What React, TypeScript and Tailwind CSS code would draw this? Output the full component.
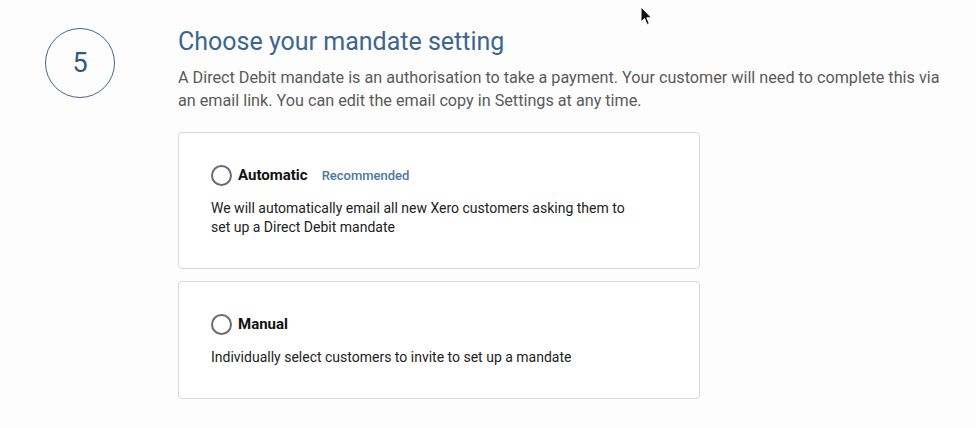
import React from 'react';

interface OptionProps {
  title: string;
  badge?: string;
  description: string;
  heightClass: string;
}

function MandateOption({ title, badge, description, heightClass }: OptionProps) {
  return (
    <label className={`flex w-[522px] flex-col rounded-[4px] border border-[#d9d9d9] bg-white pl-[32px] pt-[31px] ${heightClass}`}>
      <div className="flex items-center">
        <span className="h-[21px] w-[21px] rounded-full border-2 border-[#6b6b6b]" />
        <span className="ml-[6px] text-[15px] font-bold text-[#111]">{title}</span>
        {badge && <span className="ml-[14px] text-[13px] font-medium text-[#4a77a3]">{badge}</span>}
      </div>
      <p className="mt-[12px] max-w-[425px] text-[14px] leading-[19px] text-[#222]">{description}</p>
    </label>
  );
}

export default function App() {
  return (
    <div className="relative h-[428px] w-[976px] overflow-hidden bg-[#fdfdfd]" style={{ fontFamily: 'Roboto, "Noto Sans", sans-serif' }}>
      <div className="flex pl-[45px] pt-[28px]">
        <div className="flex h-[70px] w-[70px] shrink-0 items-center justify-center rounded-full border-[1.5px] border-[#3d6791] text-[27px] text-[#2f5a85]">
          5
        </div>
        <div className="ml-[63px] flex flex-col">
          <h1 className="text-[25px] leading-[28px] text-[#3b6690]">Choose your mandate setting</h1>
          <p className="mt-[10px] w-[775px] text-[16.2px] leading-[23px] text-[#5a5a5a]">
            A Direct Debit mandate is an authorisation to take a payment. Your customer will need to complete this via an email link. You can edit the email copy in Settings at any time.
          </p>
          <div className="mt-[20px] flex flex-col gap-[12px]">
            <MandateOption
              title="Automatic"
              badge="Recommended"
              description="We will automatically email all new Xero customers asking them to set up a Direct Debit mandate"
              heightClass="h-[137px]"
            />
            <MandateOption
              title="Manual"
              description="Individually select customers to invite to set up a mandate"
              heightClass="h-[118px]"
            />
          </div>
        </div>
      </div>
      <svg className="absolute left-[640px] top-[6px]" width="13" height="20" viewBox="0 0 13 20">
        <path d="M1 1 L1 16 L4.5 12.5 L7 18.5 L9.3 17.5 L6.8 11.8 L11.5 11.8 Z" fill="#111" stroke="#fff" strokeWidth="1" />
      </svg>
    </div>
  );
}
